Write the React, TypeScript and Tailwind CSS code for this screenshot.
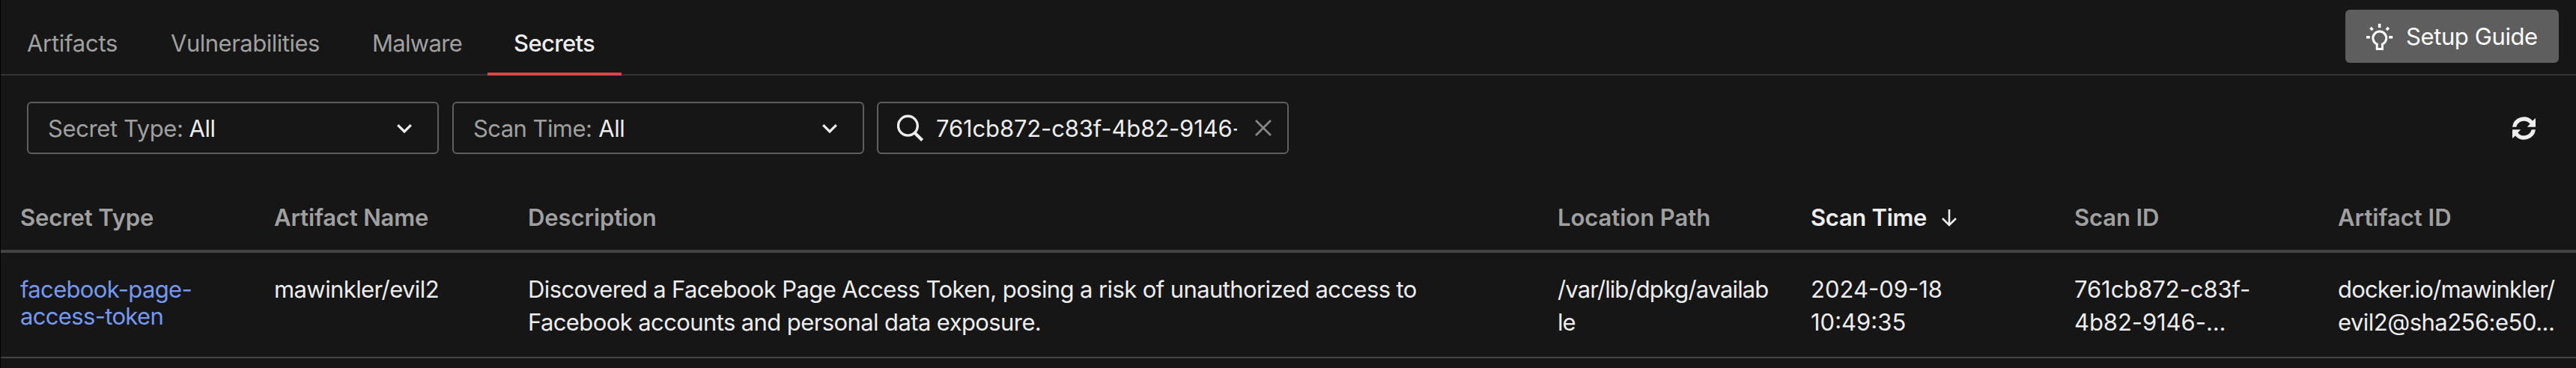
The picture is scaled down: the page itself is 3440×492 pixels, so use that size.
import type { ReactNode } from "react";

const tabs = [
  { label: "Artifacts", cls: "w-[191px] pl-[35px] text-[#a0a0a0] tracking-[-0.27px] border-transparent" },
  { label: "Vulnerabilities", cls: "w-[270px] pl-[36px] text-[#a0a0a0] tracking-[-0.49px] border-transparent" },
  { label: "Malware", cls: "w-[189px] pl-[35px] text-[#a0a0a0] tracking-[-0.7px] border-transparent" },
  { label: "Secrets", cls: "w-[179px] pl-[35px] text-[#ededed] font-medium tracking-[-0.65px] border-[#d84646]" },
];

function ChevronDown() {
  return (
    <svg width="20" height="12" viewBox="0 0 20 12" fill="none" stroke="#ededed" strokeWidth="3.2">
      <path d="M1.2 1.2 10 10 18.8 1.2" />
    </svg>
  );
}

function SearchIcon() {
  return (
    <svg width="36" height="36" viewBox="0 0 36 36" fill="none" stroke="#ededed" strokeWidth="3.4">
      <circle cx="14.4" cy="15.2" r="12.9" />
      <path d="M23.4 24.4 33.6 34.6" strokeWidth="4.2" />
    </svg>
  );
}

function CloseIcon() {
  return (
    <svg width="22" height="22" viewBox="0 0 22 22" fill="none" stroke="#888888" strokeWidth="2.6">
      <path d="M1 1 21 21M21 1 1 21" />
    </svg>
  );
}

function BulbIcon() {
  return (
    <svg width="36" height="36" viewBox="0 0 36 36" fill="none" stroke="#ffffff" strokeWidth="3">
      <path d="M14.2 34.4V28.1A8.9 8.9 0 1 1 21.4 28.1V34.4Z" />
      <path d="M17.6 .8V6M0 18.8H4.8M30.2 18.8H35.2M5.5 5.9 8.5 8.9M29.8 5.9 26.8 8.9" strokeWidth="3.6" />
    </svg>
  );
}

function RefreshIcon() {
  return (
    <svg width="31" height="31" viewBox="0 0 31 31" fill="#ededed">
      <path d="M0 13.7A15.5 15.5 0 0 1 27 5.6L31 2V13.8H19.8L23.6 9.6A10.5 10.5 0 0 0 5.3 13.7Z" />
      <path d="M31 17.3A15.5 15.5 0 0 1 4 25.4L0 29V17.2H11.2L7.4 21.4A10.5 10.5 0 0 0 25.7 17.3Z" />
    </svg>
  );
}

function SortArrow() {
  return (
    <svg width="20" height="23" viewBox="0 0 20 23" fill="none" stroke="#ededed" strokeWidth="2.6">
      <path d="M10 0V20.6M1 12 10 21 19 12" />
    </svg>
  );
}

function Select({ children }: { children: ReactNode }) {
  return (
    <button className="flex h-[70px] w-[550px] shrink-0 items-center justify-between rounded-[6px] border-2 border-[#5e5e5e] pt-[2px] pr-[34px] pl-[26px]">
      <span className="flex items-center">{children}</span>
      <ChevronDown />
    </button>
  );
}

const columns = "grid grid-cols-[339px_339px_1375px_338px_352px_352px_1fr]";

export default function App() {
  return (
    <div className="h-[492px] w-full overflow-hidden border-l border-black bg-[#161616] font-[Inter,sans-serif] text-[31px] leading-[44px] whitespace-nowrap text-[#ededed]">
      <header className="flex h-[101px] items-start justify-between border-b-2 border-[#333333]">
        <nav className="flex">
          {tabs.map((tab) => (
            <a key={tab.label} className={"flex h-[101px] items-center border-b-4 pt-[19px] " + tab.cls}>
              {tab.label}
            </a>
          ))}
        </nav>
        <button className="mt-[13px] mr-[23px] flex h-[71px] w-[285px] items-center rounded-[6px] bg-[#5e5e5e] pl-[28px] tracking-[-0.4px] text-white">
          <BulbIcon />
          <span className="ml-[17px]">Setup Guide</span>
        </button>
      </header>

      <section className="mt-[35px] flex items-center pl-[35px]">
        <Select>
          <span className="tracking-[-0.39px] text-[#a0a0a0]">Secret Type:</span>
          <span className="ml-[8px] tracking-[-0.45px]">All</span>
        </Select>
        <div className="ml-[18px]">
          <Select>
            <span className="tracking-[-0.57px] text-[#a0a0a0]">Scan Time:</span>
            <span className="ml-[9px] tracking-[-0.45px]">All</span>
          </Select>
        </div>
        <div className="ml-[17px] flex h-[70px] w-[550px] items-center rounded-[6px] border-2 border-[#5e5e5e] pl-[25px]">
          <SearchIcon />
          <span className="ml-[16px] w-[402px] overflow-hidden pt-[2px] tracking-[-0.14px]">761cb872-c83f-4b82-9146-</span>
          <span className="ml-[24px]"><CloseIcon /></span>
        </div>
        <button className="mr-[54px] ml-auto">
          <RefreshIcon />
        </button>
      </section>

      <section className="mt-[42px]">
        <div className={columns + " h-[90px] items-center border-b-4 border-[#444444] pl-[26px] font-semibold text-[#a0a0a0]"}>
          <span className="tracking-[-0.14px]">Secret Type</span>
          <span className="tracking-[-0.15px]">Artifact Name</span>
          <span className="tracking-[-0.1px]">Description</span>
          <span className="tracking-[-0.05px]">Location Path</span>
          <span className="flex items-center gap-[20px] tracking-[-0.32px] text-[#ededed]">
            Scan Time
            <SortArrow />
          </span>
          <span className="tracking-[-0.1px]">Scan ID</span>
          <span>Artifact ID</span>
        </div>
        <div className={columns + " h-[141px] items-start border-b-2 border-[#444444] pt-[27px] pl-[26px] tracking-[-0.6px]"}>
          <a className="pt-[4px] leading-[36px] tracking-[-0.66px] text-[#7499f0]">
            facebook-page-
            <br />
            access-token
          </a>
          <span>mawinkler/evil2</span>
          <p>
            Discovered a Facebook Page Access Token, posing a risk of unauthorized access to
            <br />
            Facebook accounts and personal data exposure.
          </p>
          <span className="tracking-[-0.9px]">
            /var/lib/dpkg/availab
            <br />
            le
          </span>
          <span className="tracking-normal">
            2024-09-18
            <br />
            10:49:35
          </span>
          <span className="tracking-[-0.08px]">
            761cb872-c83f-
            <br />
            4b82-9146-...
          </span>
          <span>
            <span className="tracking-[-0.82px]">docker.io/mawinkler/</span>
            <br />
            <span className="tracking-[-0.52px]">evil2@sha256:e50...</span>
          </span>
        </div>
      </section>
    </div>
  );
}
